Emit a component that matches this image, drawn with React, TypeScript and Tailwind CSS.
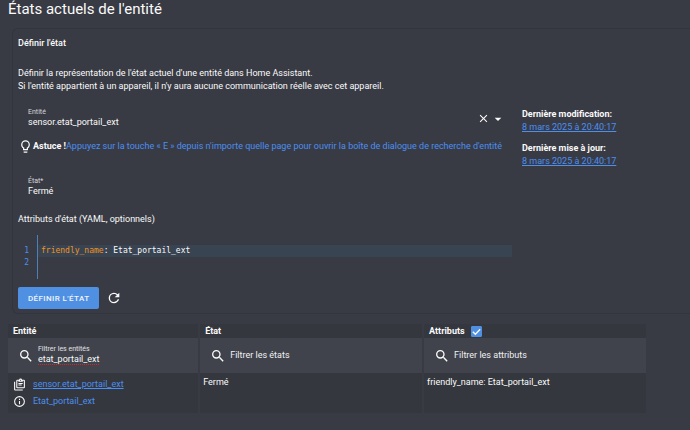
import React, { useState } from "react";

const SearchIcon = () => (
  <svg viewBox="0 0 24 24" fill="currentColor" className="size-4 shrink-0">
    <path d="M9.5 3A6.5 6.5 0 0 1 16 9.5c0 1.61-.59 3.09-1.56 4.23l.27.27h.79l5 5-1.5 1.5-5-5v-.79l-.27-.27A6.52 6.52 0 0 1 9.5 16a6.5 6.5 0 0 1 0-13m0 2C7 5 5 7 5 9.5S7 14 9.5 14 14 12 14 9.5 12 5 9.5 5" />
  </svg>
);

const timestamps = [
  { label: "Dernière modification:", value: "8 mars 2025 à 20:40:17" },
  { label: "Dernière mise à jour:", value: "8 mars 2025 à 20:40:17" },
];

export default function App() {
  const [entity, setEntity] = useState("sensor.etat_portail_ext");
  const [state, setState] = useState("Fermé");
  const [filter, setFilter] = useState("etat_portail_ext");
  const [showAttributes, setShowAttributes] = useState(true);

  return (
    <div className="min-h-screen overflow-x-hidden bg-[#393b44] font-[Roboto,sans-serif] text-[9px] leading-[13px] text-[#fafafa]">
      <h1 className="px-2 text-[15px] leading-[18px]">États actuels de l'entité</h1>

      {/* Set state card */}
      <section className="mt-[10px] ml-3 rounded-l-md border border-r-0 border-[#33353d] pb-1 pl-[5px]">
        <h2 className="pt-2 font-medium">Définir l'état</h2>
        <p className="mt-[17px]">
          Définir la représentation de l'état actuel d'une entité dans Home Assistant.
          <br />
          Si l'entité appartient à un appareil, il n'y aura aucune communication réelle avec cet appareil.
        </p>

        <div className="mt-[15px] flex gap-[10px]">
          <div className="min-w-0 flex-1">
            <div className="flex items-center pr-[6px] pl-[10px]">
              <div className="flex flex-1 flex-col">
                <label htmlFor="entity" className="text-[7px] leading-2 text-[#d5d6da]">
                  Entité
                </label>
                <input
                  id="entity"
                  value={entity}
                  onChange={(e) => setEntity(e.target.value)}
                  className="h-[13px] w-full outline-none"
                />
              </div>
              <button aria-label="Effacer" onClick={() => setEntity("")}>
                <svg viewBox="0 0 24 24" fill="currentColor" className="size-[13px]">
                  <path d="M19 6.41 17.59 5 12 10.59 6.41 5 5 6.41 10.59 12 5 17.59 6.41 19 12 13.41 17.59 19 19 17.59 13.41 12z" />
                </svg>
              </button>
              <button aria-label="Ouvrir la liste">
                <svg viewBox="0 0 24 24" fill="currentColor" className="size-4">
                  <path d="m7 10 5 5 5-5z" />
                </svg>
              </button>
            </div>

            <div className="mt-[10px] flex items-center">
              <svg viewBox="0 0 24 24" fill="currentColor" className="size-[15px] shrink-0">
                <path d="M12 2a7 7 0 0 1 7 7c0 2.38-1.19 4.47-3 5.74V17a1 1 0 0 1-1 1H9a1 1 0 0 1-1-1v-2.26C6.19 13.47 5 11.38 5 9a7 7 0 0 1 7-7M9 21v-1h6v1a1 1 0 0 1-1 1h-4a1 1 0 0 1-1-1m3-17a5 5 0 0 0-5 5c0 2.05 1.23 3.81 3 4.58V16h4v-2.42c1.77-.77 3-2.53 3-4.58a5 5 0 0 0-5-5" />
              </svg>
              <b>Astuce !</b>
              <a href="#" className="whitespace-nowrap text-[#4b8ff0]">
                Appuyez sur la touche « E » depuis n'importe quelle page pour ouvrir la boîte de dialogue de recherche d'entité
              </a>
            </div>

            <div className="mt-[23px] flex flex-col pl-[10px]">
              <label htmlFor="state" className="text-[7px] leading-2 text-[#d5d6da]">
                État*
              </label>
              <input
                id="state"
                value={state}
                onChange={(e) => setState(e.target.value)}
                className="h-[13px] w-full outline-none"
              />
            </div>

            <p className="mt-[15px]">Attributs d'état (YAML, optionnels)</p>

            {/* YAML editor */}
            <div className="mt-[9px] flex font-['DejaVu_Sans_Mono',monospace] text-[8px] leading-3">
              <div className="w-5 shrink-0 border-r border-[#4d7fb8] py-[10px] pr-2 text-right text-[#4b8ff0]">
                <div>1</div>
                <div>2</div>
              </div>
              <div
                role="textbox"
                aria-label="Attributs d'état"
                aria-multiline="true"
                contentEditable
                suppressContentEditableWarning
                spellCheck={false}
                className="flex-1 py-[10px] outline-none"
              >
                <div className="bg-[#394453] pl-[3px]">
                  <span className="text-[#f0931e]">friendly_name</span>: Etat_portail_ext
                </div>
                <div className="h-3 pl-[3px]" />
              </div>
            </div>

            <div className="mt-2 flex items-center gap-[7px]">
              <button className="h-[22px] rounded-xs bg-[#4f90e2] px-[10px] text-[8px] font-medium tracking-wider text-[#eef4fd] uppercase">
                Définir l'état
              </button>
              <button aria-label="Actualiser">
                <svg viewBox="0 0 24 24" fill="currentColor" className="size-4">
                  <path d="M17.65 6.35A7.96 7.96 0 0 0 12 4a8 8 0 0 0-8 8 8 8 0 0 0 8 8c3.73 0 6.84-2.55 7.73-6h-2.08A5.99 5.99 0 0 1 12 18a6 6 0 0 1-6-6 6 6 0 0 1 6-6c1.66 0 3.14.69 4.22 1.78L13 11h7V4z" />
                </svg>
              </button>
            </div>
          </div>

          <dl className="w-[168px] shrink-0">
            {timestamps.map((item) => (
              <div key={item.label} className="mb-2">
                <dt className="font-bold">{item.label}</dt>
                <dd>
                  <a href="#" className="text-[#4b8ff0] underline">
                    {item.value}
                  </a>
                </dd>
              </div>
            ))}
          </dl>
        </div>
      </section>

      {/* Entities table */}
      <div className="mt-[10px] mr-[42px] ml-[6px]">
        <table className="w-full table-fixed border-separate border-spacing-x-[2px] border-spacing-y-0 text-left">
          <thead>
            <tr className="h-[14px] bg-[#35373e]">
              <th className="w-[30%] px-[5px] font-bold">Entité</th>
              <th className="w-[35%] px-[5px] font-bold">État</th>
              <th className="w-[35%] px-[5px] font-bold">
                <label className="flex items-center gap-[6px]">
                  Attributs
                  <span className="relative flex size-[11px]">
                    <input
                      type="checkbox"
                      checked={showAttributes}
                      onChange={(e) => setShowAttributes(e.target.checked)}
                      className="peer size-[11px] appearance-none rounded-[1px] border border-[#9a9ca3] checked:border-[#4f90e2] checked:bg-[#4f90e2]"
                    />
                    <svg
                      viewBox="0 0 24 24"
                      fill="none"
                      stroke="currentColor"
                      strokeWidth={3}
                      className="pointer-events-none absolute inset-0 size-[11px] opacity-0 peer-checked:opacity-100"
                    >
                      <path d="M4 12.5 9.5 18 20 7" />
                    </svg>
                  </span>
                </label>
              </th>
            </tr>
            <tr className="h-[35px] bg-[#40434b] font-normal">
              <td className="px-[10px]">
                <div className="flex items-center gap-1">
                  <SearchIcon />
                  <div className="flex flex-1 flex-col">
                    <label htmlFor="filter-entity" className="text-[7px] leading-2 text-[#e0e1e4]">
                      Filtrer les entités
                    </label>
                    <input
                      id="filter-entity"
                      value={filter}
                      onChange={(e) => setFilter(e.target.value)}
                      className="h-[13px] w-full underline decoration-[#d0282c] decoration-dotted decoration-1 underline-offset-2 outline-none"
                    />
                  </div>
                </div>
              </td>
              <td className="px-[10px]">
                <div className="flex items-center gap-1">
                  <SearchIcon />
                  <input
                    aria-label="Filtrer les états"
                    placeholder="Filtrer les états"
                    className="h-[13px] w-full outline-none placeholder:text-[#f1f1f3]"
                  />
                </div>
              </td>
              <td className="px-[10px]">
                <div className="flex items-center gap-1">
                  <SearchIcon />
                  <input
                    aria-label="Filtrer les attributs"
                    placeholder="Filtrer les attributs"
                    className="h-[13px] w-full outline-none placeholder:text-[#f1f1f3]"
                  />
                </div>
              </td>
            </tr>
          </thead>
          <tbody>
            <tr className="h-10 bg-[#35373e] align-top">
              <td className="px-[5px] pt-[3px]">
                <div className="flex h-[17px] items-center gap-[7px]">
                  <button aria-label="Copier">
                    <svg viewBox="0 0 24 24" fill="currentColor" className="size-[13px]">
                      <path d="M4 7v14h14v2H4a2 2 0 0 1-2-2V7zm16-4a2 2 0 0 1 2 2v12a2 2 0 0 1-2 2H8a2 2 0 0 1-2-2V5a2 2 0 0 1 2-2h3.18C11.6 1.84 12.7 1 14 1s2.4.84 2.82 2zm-6 0a1 1 0 0 0-1 1 1 1 0 0 0 1 1 1 1 0 0 0 1-1 1 1 0 0 0-1-1m-4 4V5H8v12h12V5h-2v2zm8 2v2h-8V9zm-2 3v2h-6v-2z" />
                    </svg>
                  </button>
                  <a href="#" className="text-[#4b8ff0] underline">
                    sensor.etat_portail_ext
                  </a>
                </div>
                <div className="flex h-[17px] items-center gap-[7px]">
                  <button aria-label="Informations">
                    <svg viewBox="0 0 24 24" fill="currentColor" className="size-[13px]">
                      <path d="M11 9h2V7h-2m1 13c-4.41 0-8-3.59-8-8s3.59-8 8-8 8 3.59 8 8-3.59 8-8 8m0-18A10 10 0 0 0 2 12a10 10 0 0 0 10 10 10 10 0 0 0 10-10A10 10 0 0 0 12 2m-1 15h2v-6h-2z" />
                    </svg>
                  </button>
                  <a href="#" className="text-[#4b8ff0]">
                    Etat_portail_ext
                  </a>
                </div>
              </td>
              <td className="px-[3px] pt-[3px]">Fermé</td>
              <td className="px-[3px] pt-[3px]">{showAttributes && "friendly_name: Etat_portail_ext"}</td>
            </tr>
          </tbody>
        </table>
      </div>
    </div>
  );
}
